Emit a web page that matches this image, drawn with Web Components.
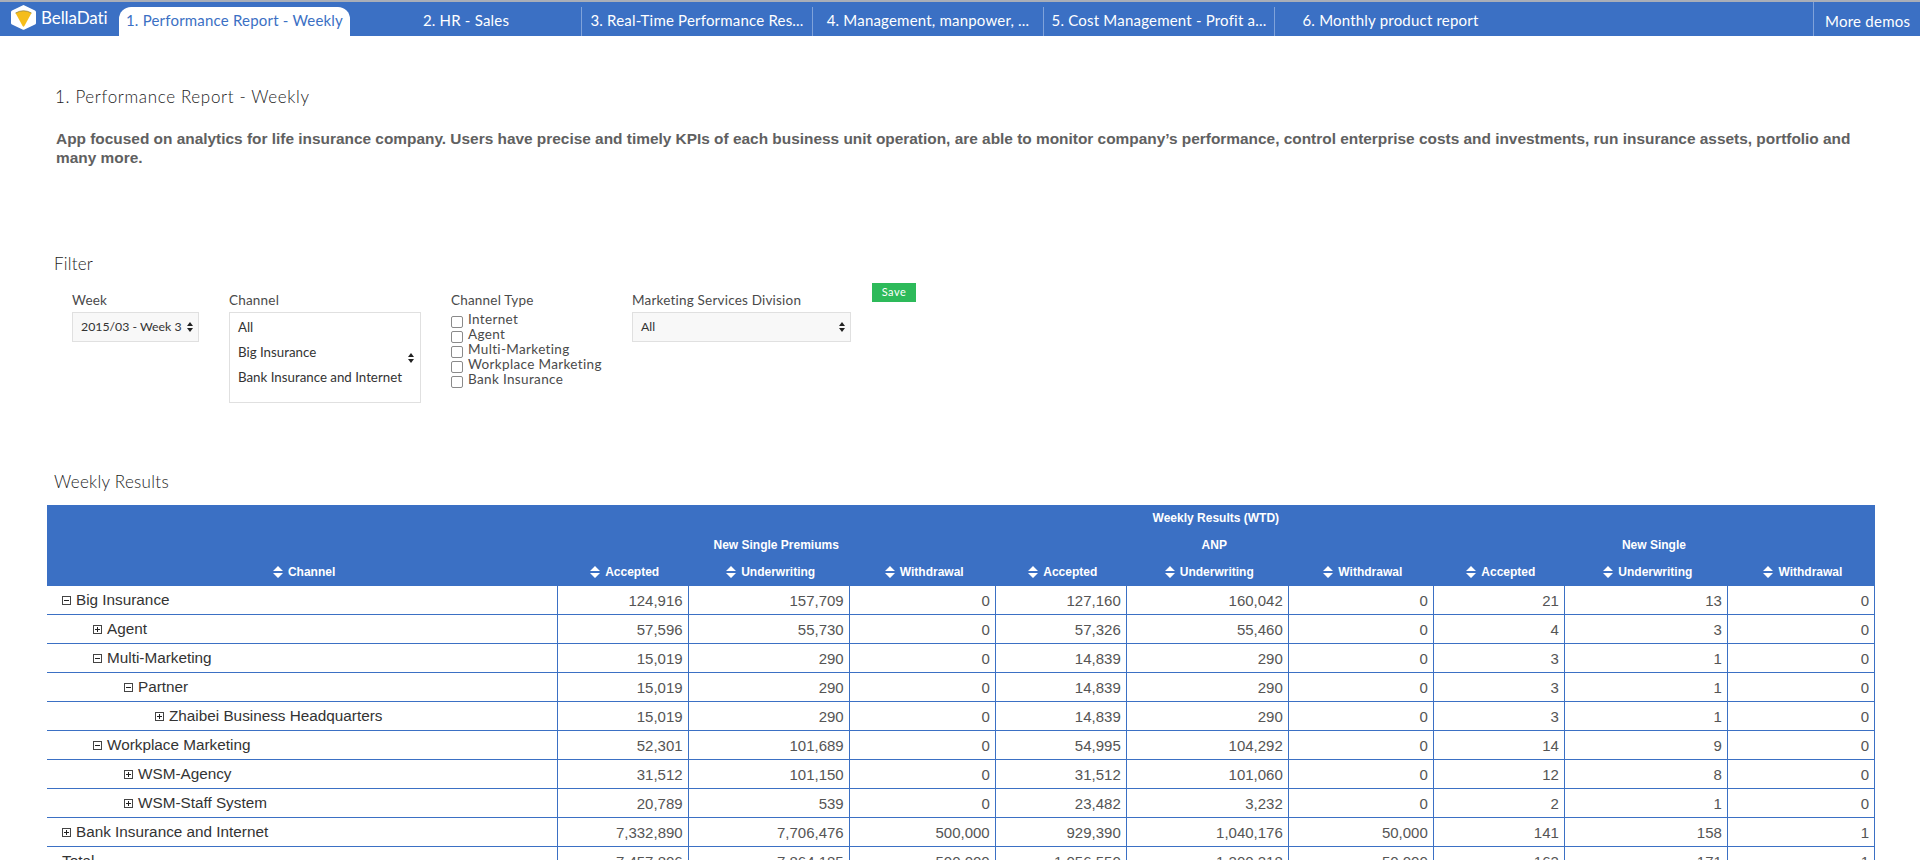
<!DOCTYPE html>
<html>
<head>
<meta charset="utf-8">
<title>BellaDati</title>
<style>
    html, body { margin: 0; height: 860px; overflow: hidden; background: #fff; }
    body { font-family: "Lato", "Liberation Sans", sans-serif; }
</style>
</head>
<body>
<demo-nav>
    <nav-tab active>1. Performance Report - Weekly</nav-tab>
    <nav-tab>2. HR - Sales</nav-tab>
    <nav-tab>3. Real-Time Performance Res...</nav-tab>
    <nav-tab>4. Management, manpower, ...</nav-tab>
    <nav-tab>5. Cost Management - Profit a...</nav-tab>
    <nav-tab>6. Monthly product report</nav-tab>
</demo-nav>
<report-intro heading="1. Performance Report - Weekly">App focused on analytics for life insurance company. Users have precise and timely KPIs of each business unit operation, are able to monitor company’s performance, control enterprise costs and investments, run insurance assets, portfolio and many more.</report-intro>
<filter-panel></filter-panel>
<results-table></results-table>

<script>
const navTemplate = document.createElement('template');
navTemplate.innerHTML = `
    <style>
        :host {
            display: flex;
            height: 34px;
            background: #3b70c4;
            border-top: 2px solid #a9aeb8;
            color: #fff;
            font-family: "Lato", sans-serif;
        }

        .logo {
            display: flex;
            align-items: center;
            width: 119px;
            box-sizing: border-box;
            padding: 0 0 3px 11px;
            gap: 5px;
            font-size: 17px;
            letter-spacing: -0.1px;
        }

        .tabs {
            display: flex;
            flex: 1;
        }

        .more {
            display: flex;
            align-items: center;
            width: 107px;
            box-sizing: border-box;
            padding: 3px 0 0 11px;
            border-left: 1px solid #7fa2da;
            font-size: 15px;
            letter-spacing: 0.25px;
        }
    </style>
    <div class="logo">
        <svg width="25" height="25" viewBox="0 0 25 25">
            <path d="M12.5 0 L24 5.5 Q25 6 25 7 V18 Q25 19 24 19.5 L13.5 24.5 Q12.5 25 11.5 24.5 L1 19.5 Q0 19 0 18 V7 Q0 6 1 5.5 Z" fill="#fff"/>
            <path d="M4.5 8 Q12.5 3.5 20.5 8 L13.4 21 Q12.5 22.4 11.6 21 Z" fill="#f5bd1b"/>
            <path d="M4.5 8 Q12.5 3.5 20.5 8" fill="none" stroke="#8a7a3c" stroke-width="0.7"/>
        </svg>
        <span>BellaDati</span>
    </div>
    <div class="tabs"><slot></slot></div>
    <div class="more">More demos</div>
`;

class DemoNav extends HTMLElement {
    constructor() {
        super();
        this._shadowRoot = this.attachShadow({ mode: 'open' });
        this._shadowRoot.appendChild(navTemplate.content.cloneNode(true));
    }
}

const tabTemplate = document.createElement('template');
tabTemplate.innerHTML = `
    <style>
        :host {
            display: flex;
            align-items: center;
            justify-content: center;
            box-sizing: border-box;
            width: 231px;
            height: 29px;
            margin-top: 5px;
            padding-bottom: 3px;
            border-right: 1px solid #7fa2da;
            font-size: 15px;
            letter-spacing: 0.2px;
            white-space: nowrap;
        }

        :host([active]) {
            background: #fff;
            color: #3b70c4;
            border-right: 0;
            border-radius: 12px 12px 0 0;
            margin-right: 1px;
        }

        :host(:last-child) {
            border-right: 0;
        }
    </style>
    <slot></slot>
`;

class NavTab extends HTMLElement {
    constructor() {
        super();
        this.attachShadow({ mode: 'open' }).appendChild(tabTemplate.content.cloneNode(true));
    }
}

const introTemplate = document.createElement('template');
introTemplate.innerHTML = `
    <style>
        :host {
            display: block;
            height: 166px;
            padding: 50px 56px 0 56px;
        }

        h1 {
            margin: 0 0 0 -1px;
            font: 300 17px/22px "Lato", sans-serif;
            letter-spacing: 0.65px;
            color: #1c1c1c;
        }

        p {
            margin: 21px 0 0 0;
            font: 700 15.42px/19px "Liberation Sans", sans-serif;
            color: #606060;
        }
    </style>
    <h1></h1>
    <p><slot></slot></p>
`;

class ReportIntro extends HTMLElement {
    constructor() {
        super();
        this._shadowRoot = this.attachShadow({ mode: 'open' });
        this._shadowRoot.appendChild(introTemplate.content.cloneNode(true));
    }

    connectedCallback() {
        this._shadowRoot.querySelector('h1').textContent = this.getAttribute('heading');
    }
}

const filterTemplate = document.createElement('template');
filterTemplate.innerHTML = `
    <style>
        :host {
            display: block;
            height: 218px;
            font-family: "Lato", sans-serif;
            color: #4a4a4a;
        }

        h2 {
            margin: 0 0 0 54px;
            font: 300 17px/24px "Lato", sans-serif;
            letter-spacing: 0.2px;
            color: #1c1c1c;
        }

        .row {
            display: flex;
            margin: 10px 0 0 72px;
            height: 120px;
        }

        .field { display: flex; flex-direction: column; }
        .week { width: 157px; }
        .channel { width: 222px; }
        .type { width: 181px; }
        .division { width: 240px; }

        .label {
            height: 22px;
            padding-top: 4px;
            font-size: 13.5px;
            line-height: 20px;
            letter-spacing: 0.2px;
        }

        .select {
            display: flex;
            align-items: center;
            justify-content: space-between;
            box-sizing: border-box;
            height: 30px;
            padding: 0 5px 1px 8px;
            background: #f8f8f8;
            border: 1px solid #e0e0e0;
            font-size: 12.3px;
            color: #333;
        }

        .week .select { width: 127px; }
        .division .select { width: 219px; }

        .list {
            position: relative;
            box-sizing: border-box;
            width: 192px;
            height: 91px;
            padding: 2px 8px;
            border: 1px solid #e0e0e0;
            font-size: 13.3px;
            line-height: 25px;
            color: #333;
        }

        .arrows {
            display: inline-block;
            width: 6px;
            height: 10px;
        }

        .list .arrows {
            position: absolute;
            right: 6px;
            top: 40px;
        }

        .check {
            display: flex;
            align-items: flex-start;
            height: 15px;
            font-size: 13.5px;
            line-height: 15px;
            letter-spacing: 0.35px;
        }

        .check i {
            display: block;
            box-sizing: border-box;
            width: 12px;
            height: 12px;
            margin: 4px 5px 0 0;
            border: 1px solid #8a8a8a;
            border-radius: 2px;
            background: #fff;
        }

        .save {
            align-self: flex-start;
            margin-top: -3px;
            width: 44px;
            height: 19px;
            background: #2dba5a;
            color: #fff;
            font-size: 11px;
            line-height: 18px;
            letter-spacing: 0.5px;
            text-align: center;
        }
    </style>
    <h2>Filter</h2>
    <div class="row">
        <div class="field week">
            <div class="label">Week</div>
            <div class="select">2015/03 - Week 3 <svg class="arrows" viewBox="0 0 6 10"><path d="M3 0 L6 4 H0 Z M3 10 L0 6 H6 Z" fill="#222"/></svg></div>
        </div>
        <div class="field channel">
            <div class="label">Channel</div>
            <div class="list">
                All<br>Big Insurance<br>Bank Insurance and Internet
                <svg class="arrows" viewBox="0 0 6 10"><path d="M3 0 L6 4 H0 Z M3 10 L0 6 H6 Z" fill="#222"/></svg>
            </div>
        </div>
        <div class="field type">
            <div class="label">Channel Type</div>
            <div class="check"><i></i>Internet</div>
            <div class="check"><i></i>Agent</div>
            <div class="check"><i></i>Multi-Marketing</div>
            <div class="check"><i></i>Workplace Marketing</div>
            <div class="check"><i></i>Bank Insurance</div>
        </div>
        <div class="field division">
            <div class="label">Marketing Services Division</div>
            <div class="select">All <svg class="arrows" viewBox="0 0 6 10"><path d="M3 0 L6 4 H0 Z M3 10 L0 6 H6 Z" fill="#222"/></svg></div>
        </div>
        <div class="save">Save</div>
    </div>
`;

class FilterPanel extends HTMLElement {
    constructor() {
        super();
        this.attachShadow({ mode: 'open' }).appendChild(filterTemplate.content.cloneNode(true));
    }
}

const tableTemplate = document.createElement('template');
tableTemplate.innerHTML = `
    <style>
        :host {
            display: block;
            margin: 0 0 0 47px;
            width: 1828px;
        }

        h2 {
            margin: 0 0 0 7px;
            font: 300 17px/24px "Lato", sans-serif;
            letter-spacing: 0.3px;
            color: #1c1c1c;
            padding-bottom: 11px;
        }

        table {
            table-layout: fixed;
            width: 1828px;
            border-collapse: collapse;
            font-family: "Liberation Sans", sans-serif;
        }

        th {
            background: #3b70c4;
            color: #fff;
            font-size: 12px;
            font-weight: 700;
            padding: 0;
            height: 27px;
        }

        tr.top th { height: 26px; }
        tr.sort th { padding-left: 4px; }

        th svg {
            width: 10px;
            height: 12px;
            margin-right: 5px;
            vertical-align: -2px;
        }

        td {
            height: 28px;
            padding: 0 5px;
            border: 1px solid #3b70c4;
            font-size: 15px;
            color: #555;
            text-align: right;
            white-space: nowrap;
        }

        td.name {
            border-left: 0;
            text-align: left;
            font-size: 15.3px;
            color: #333;
        }

        td.name div {
            display: flex;
            align-items: center;
        }

        td.name svg {
            flex: none;
            width: 9px;
            height: 9px;
            margin-right: 5px;
        }
    </style>
    <h2>Weekly Results</h2>
    <table>
        <colgroup></colgroup>
        <thead></thead>
        <tbody></tbody>
    </table>
`;

const COLUMN_WIDTHS = [510, 131, 161, 146, 131, 162, 145, 131, 163, 147];
const SORT_ICON = '<svg viewBox="0 0 10 12"><path d="M5 0 L10 5 H0 Z M5 12 L0 7 H10 Z" fill="#fff"/></svg>';
const ROWS = [
    [0, 'minus', 'Big Insurance', '124,916', '157,709', '0', '127,160', '160,042', '0', '21', '13', '0'],
    [1, 'plus', 'Agent', '57,596', '55,730', '0', '57,326', '55,460', '0', '4', '3', '0'],
    [1, 'minus', 'Multi-Marketing', '15,019', '290', '0', '14,839', '290', '0', '3', '1', '0'],
    [2, 'minus', 'Partner', '15,019', '290', '0', '14,839', '290', '0', '3', '1', '0'],
    [3, 'plus', 'Zhaibei Business Headquarters', '15,019', '290', '0', '14,839', '290', '0', '3', '1', '0'],
    [1, 'minus', 'Workplace Marketing', '52,301', '101,689', '0', '54,995', '104,292', '0', '14', '9', '0'],
    [2, 'plus', 'WSM-Agency', '31,512', '101,150', '0', '31,512', '101,060', '0', '12', '8', '0'],
    [2, 'plus', 'WSM-Staff System', '20,789', '539', '0', '23,482', '3,232', '0', '2', '1', '0'],
    [0, 'plus', 'Bank Insurance and Internet', '7,332,890', '7,706,476', '500,000', '929,390', '1,040,176', '50,000', '141', '158', '1'],
    [0, '', 'Total', '7,457,806', '7,864,185', '500,000', '1,056,550', '1,200,218', '50,000', '162', '171', '1']
];

function treeIcon(kind) {
    const bar = kind === 'plus' ? 'M4.5 2 V7 ' : '';
    return `<svg viewBox="0 0 9 9"><rect x="0.5" y="0.5" width="8" height="8" fill="#fff" stroke="#444"/><path d="${bar}M2 4.5 H7" stroke="#222" fill="none"/></svg>`;
}

class ResultsTable extends HTMLElement {
    constructor() {
        super();
        this._shadowRoot = this.attachShadow({ mode: 'open' });
        this._shadowRoot.appendChild(tableTemplate.content.cloneNode(true));
    }

    connectedCallback() {
        this.render();
    }

    render() {
        this._shadowRoot.querySelector('colgroup').innerHTML =
            COLUMN_WIDTHS.map(w => `<col style="width:${w}px">`).join('');

        const sortable = label => `<th>${SORT_ICON}${label}</th>`;
        const subHeads = ['Accepted', 'Underwriting', 'Withdrawal'];
        this._shadowRoot.querySelector('thead').innerHTML = `
            <tr class="top"><th></th><th colspan="9">Weekly Results (WTD)</th></tr>
            <tr><th></th><th colspan="3">New Single Premiums</th><th colspan="3">ANP</th><th colspan="3">New Single</th></tr>
            <tr class="sort">${sortable('Channel')}${subHeads.concat(subHeads, subHeads).map(sortable).join('')}</tr>
        `;

        this._shadowRoot.querySelector('tbody').innerHTML = ROWS.map(([level, icon, name, ...values]) => `
            <tr>
                <td class="name"><div style="padding-left:${10 + level * 31}px">${icon ? treeIcon(icon) : ''}${name}</div></td>
                ${values.map(v => `<td>${v}</td>`).join('')}
            </tr>
        `).join('');
    }
}

window.customElements.define('demo-nav', DemoNav);
window.customElements.define('nav-tab', NavTab);
window.customElements.define('report-intro', ReportIntro);
window.customElements.define('filter-panel', FilterPanel);
window.customElements.define('results-table', ResultsTable);
</script>
</body>
</html>
